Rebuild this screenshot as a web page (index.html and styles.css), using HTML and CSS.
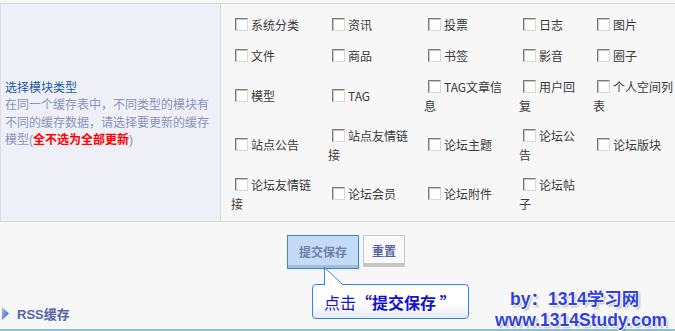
FILE: index.html
```html
<!DOCTYPE html>
<html lang="zh-CN">
<head>
<meta charset="utf-8">
<title>缓存更新</title>
<link rel="stylesheet" href="styles.css">
</head>
<body>
<div class="page">
  <div class="table">
    <div class="label-cell">
      <div class="title">选择模块类型</div>
      <div class="desc">在同一个缓存表中，不同类型的模块有不同的缓存数据，请选择要更新的缓存模型<span class="paren">(</span><b class="red">全不选为全部更新</b><span class="paren">)</span></div>
    </div>
    <div class="opts-cell">
      <div class="grid">
        <label class="opt"><input type="checkbox">系统分类</label>
        <label class="opt"><input type="checkbox">资讯</label>
        <label class="opt"><input type="checkbox">投票</label>
        <label class="opt"><input type="checkbox">日志</label>
        <label class="opt"><input type="checkbox">图片</label>
        <label class="opt"><input type="checkbox">文件</label>
        <label class="opt"><input type="checkbox">商品</label>
        <label class="opt"><input type="checkbox">书签</label>
        <label class="opt"><input type="checkbox">影音</label>
        <label class="opt"><input type="checkbox">圈子</label>
        <label class="opt"><input type="checkbox">模型</label>
        <label class="opt"><input type="checkbox">TAG</label>
        <label class="opt"><input type="checkbox">TAG文章信息</label>
        <label class="opt"><input type="checkbox">用户回复</label>
        <label class="opt"><input type="checkbox">个人空间列表</label>
        <label class="opt"><input type="checkbox">站点公告</label>
        <label class="opt"><input type="checkbox">站点友情链接</label>
        <label class="opt"><input type="checkbox">论坛主题</label>
        <label class="opt"><input type="checkbox">论坛公告</label>
        <label class="opt"><input type="checkbox">论坛版块</label>
        <label class="opt"><input type="checkbox">论坛友情链接</label>
        <label class="opt"><input type="checkbox">论坛会员</label>
        <label class="opt"><input type="checkbox">论坛附件</label>
        <label class="opt"><input type="checkbox">论坛帖子</label>
      </div>
    </div>
  </div>

  <div class="actions">
    <button class="btn btn-primary" type="button">提交保存</button>
    <button class="btn btn-reset" type="button">重置</button>
  </div>

  <div class="section-head">
    <svg class="arrow" width="7" height="13" viewBox="0 0 7 13">
      <defs>
        <linearGradient id="ag" x1="0" y1="0" x2="1" y2="1">
          <stop offset="0" stop-color="#a8c8f0"/>
          <stop offset="1" stop-color="#2858c0"/>
        </linearGradient>
      </defs>
      <polygon points="0,0 7,6.5 0,13" fill="url(#ag)"/>
    </svg>
    <span class="section-title">RSS缓存</span>
  </div>

  <div class="tip">
    <svg class="tip-pointer" width="21" height="19" viewBox="0 0 21 19">
      <polygon points="1.5,0.5 19.5,17.5 19.5,19 1.5,19" fill="#ffffff"/>
      <path d="M1.5 0 V18 M1.5 0.5 L19.5 17.5" stroke="#2a86e6" stroke-width="1" fill="none"/>
    </svg>
    <span class="tip-normal">点击</span><b class="tip-bold">“提交保存 ”</b>
  </div>

  <div class="mark">
    <div class="mark-line1">by：1314学习网</div>
    <div class="mark-line2">www.1314Study.com</div>
  </div>
</div>
</body>
</html>
```

FILE: styles.css
```css
* { box-sizing: border-box; }

html, body {
  margin: 0;
  padding: 0;
  background: #f7f7f7;
}

.page {
  position: relative;
  width: 675px;
  height: 331px;
  overflow: hidden;
  padding-top: 3px;
  font-family: "Noto Sans CJK SC", "Noto Sans", sans-serif;
  font-size: 12px;
  color: #3c3c3c;
}

.table {
  display: flex;
  height: 219px;
  border-top: 1px solid #d6d6dc;
  border-bottom: 1px solid #d6d6dc;
}

.label-cell {
  width: 221px;
  flex: none;
  background: #efeff7;
  border-left: 1px solid #dcdce6;
  border-right: 1px solid #d6d6e0;
  padding: 2px 4px 0 4px;
  display: flex;
  flex-direction: column;
  justify-content: center;
  line-height: 17.5px;
}

.title {
  color: #1a5aa6;
}

.desc {
  color: #8a93bb;
}

.paren {
  font-family: "Liberation Sans", sans-serif;
}

.red {
  color: #ff0000;
  font-weight: bold;
}

.opts-cell {
  flex: 1;
  min-width: 0;
  padding: 5px 0 3px 10px;
}

.grid {
  display: grid;
  grid-template-columns: 87px 86px 85px 64px 84px;
  grid-template-rows: 31px 31px 49px 49px 49px;
  column-gap: 10px;
  align-items: center;
}

.opt {
  display: block;
  line-height: 19px;
  color: #3a3a3a;
}

.opt input {
  -webkit-appearance: none;
  appearance: none;
  width: 13px;
  height: 13px;
  margin: 0 3px 0 4px;
  vertical-align: -1px;
  background: #ffffff;
  border: 1px solid;
  border-color: #7c7c7c #d8d8d8 #d8d8d8 #7c7c7c;
  box-shadow: inset 1px 1px 0 #c4c4c4;
}

.actions {
  display: flex;
  justify-content: center;
  align-items: flex-start;
  gap: 4px;
  padding: 13px 0 0 17px;
  height: 81px;
}

.btn {
  font-family: "Noto Sans CJK SC", sans-serif;
  font-size: 12px;
  font-weight: bold;
  padding: 0 0 2px 0;
  margin: 0;
  cursor: pointer;
}

.btn-primary {
  width: 72px;
  height: 34px;
  border: 1px solid #2b88e8;
  background: #c4daf6;
  box-shadow: inset 0 -3px 0 #a8bcd6;
  color: #6f7faa;
}

.btn-reset {
  width: 42px;
  height: 32px;
  border: 1px solid #cacaca;
  background: #f9f9f9;
  box-shadow: inset 0 -3px 0 #c6c6c6;
  color: #5565a0;
}

.section-head {
  display: flex;
  align-items: center;
  gap: 8px;
  padding: 0 0 6px 2px;
  height: 28px;
  border-bottom: 2px solid #8ebfd3;
}

.arrow {
  display: block;
  flex: none;
}

.section-title {
  font-family: "Liberation Sans", "Noto Sans CJK SC", sans-serif;
  font-size: 13px;
  font-weight: bold;
  color: #5565a8;
}

.tip {
  position: absolute;
  left: 312px;
  top: 284px;
  width: 157px;
  height: 35px;
  border: 1px solid #2a86e6;
  border-radius: 4px;
  background: linear-gradient(#ffffff 0%, #ffffff 55%, #e6eaf6 100%);
  padding-left: 11px;
  display: flex;
  align-items: center;
  font-size: 16px;
  line-height: 20px;
  color: #1414d0;
}

.tip-pointer {
  position: absolute;
  left: 10px;
  top: -18px;
  display: block;
}

.tip-normal {
  font-weight: normal;
}

.tip-bold {
  font-weight: bold;
  color: #1010cc;
}

.mark {
  position: absolute;
  left: 494px;
  top: 289px;
  width: 181px;
  font-family: "Liberation Sans", "Noto Sans CJK SC", sans-serif;
  font-weight: bold;
  font-size: 17.5px;
  line-height: 21px;
  color: #3040e0;
  text-shadow: 1px 0 0 #fff, -1px 0 0 #fff, 0 1px 0 #fff, 0 -1px 0 #fff, 2px 2px 2px rgba(0, 0, 0, 0.25);
}

.mark-line1 {
  padding-left: 16px;
}

.mark-line2 {
  padding-left: 1px;
}
```
